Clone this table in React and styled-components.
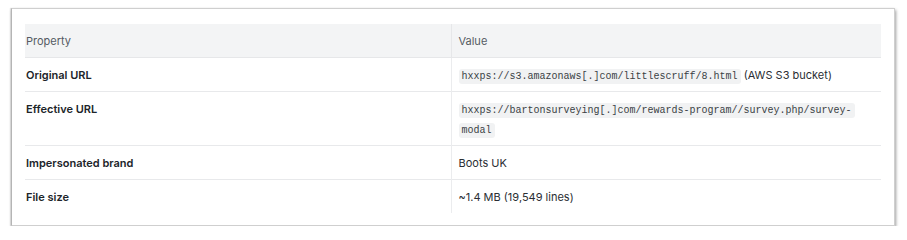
import React from "react";
import styled, { createGlobalStyle } from "styled-components";

const GlobalStyle = createGlobalStyle`
  html, body {
    margin: 0;
    padding: 0;
    background: #ffffff;
  }
  body {
    font-family: Inter, "Noto Sans", "Liberation Sans", sans-serif;
    -webkit-font-smoothing: antialiased;
  }
`;

const Page = styled.div`
  padding: 8px 12px 0 11px;
  width: 907px;
  box-sizing: border-box;
`;

const Card = styled.div`
  width: 884px;
  box-sizing: border-box;
  border: 1px solid #cfcfcf;
  border-left-color: #b5b5b5;
  background: #ffffff;
  padding: 15px 13px 12px 13px;
  box-shadow: 1px 2px 3px rgba(0, 0, 0, 0.38), -1px 0 1px rgba(0, 0, 0, 0.1);
`;

const Table = styled.table`
  width: 856px;
  border-collapse: collapse;
  table-layout: fixed;
  font-size: 11px;
  line-height: 20px;
  color: #1f2328;
`;

const cell = `
  padding: 7px 7px 6px 7px;
  text-align: left;
  vertical-align: top;
`;

const HeadCell = styled.th`
  ${cell}
  padding-left: ${(p) => (p.$first ? "1px" : "7px")};
  background: #f3f4f5;
  font-weight: 400;
  color: #555b63;
  border-bottom: 1px solid #e6e7e9;
  border-left: ${(p) => (p.$first ? "none" : "1px solid #e6e7e9")};
`;

const Row = styled.tr`
  border-bottom: ${(p) => (p.$last ? "none" : "1px solid #e8e9eb")};
`;

const LabelCell = styled.td`
  ${cell}
  padding-left: 1px;
  font-weight: 600;
  color: #202429;
`;

const ValueCell = styled.td`
  ${cell}
  border-left: 1px solid #ebecee;
  color: #2a2e33;
`;

const Code = styled.code`
  font-family: "Liberation Mono", "DejaVu Sans Mono", monospace;
  font-size: 10px;
  line-height: 12px;
  background: #f1f2f3;
  border-radius: 3px;
  padding: 2px 3px;
  color: #3a3f45;
  box-decoration-break: clone;
  -webkit-box-decoration-break: clone;
`;

const rows = [
  {
    label: "Original URL",
    value: (
      <>
        <Code>hxxps://s3.amazonaws[.]com/littlescruff/8.html</Code> (AWS S3
        bucket)
      </>
    ),
  },
  {
    label: "Effective URL",
    value: (
      <Code>
        hxxps://bartonsurveying[.]com/rewards-program//survey.php/survey-modal
      </Code>
    ),
  },
  { label: "Impersonated brand", value: "Boots UK" },
  { label: "File size", value: "~1.4 MB (19,549 lines)" },
];

const App = () => {
  return (
    <Page>
      <GlobalStyle />
      <Card>
        <Table>
          <colgroup>
            <col style={{ width: 426 }} />
            <col style={{ width: 430 }} />
          </colgroup>
          <thead>
            <tr>
              <HeadCell $first>Property</HeadCell>
              <HeadCell>Value</HeadCell>
            </tr>
          </thead>
          <tbody>
            {rows.map((row, i) => (
              <Row key={row.label} $last={i === rows.length - 1}>
                <LabelCell>{row.label}</LabelCell>
                <ValueCell>{row.value}</ValueCell>
              </Row>
            ))}
          </tbody>
        </Table>
      </Card>
    </Page>
  );
};

export default App;
